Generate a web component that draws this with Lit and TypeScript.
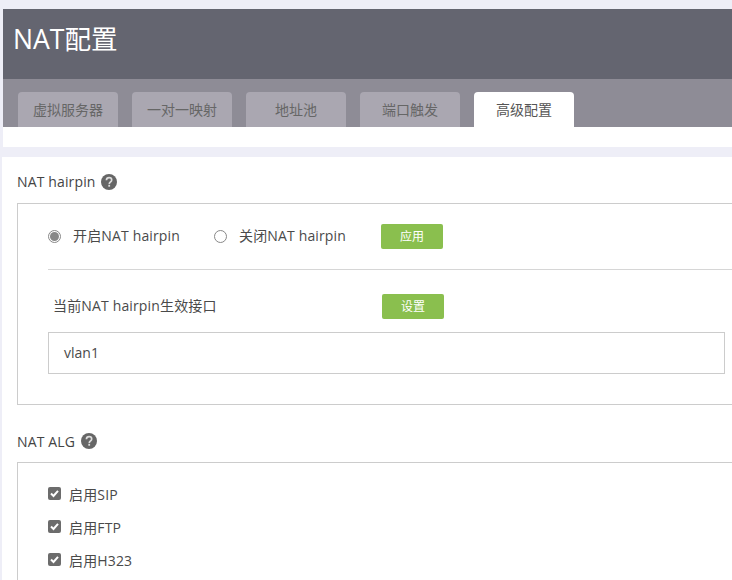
import { LitElement, html, css } from "lit";
import { customElement } from "lit/decorators.js";

const help = html`<svg class="help" viewBox="0 0 16 16" aria-hidden="true"><circle cx="8" cy="8" r="8" fill="#666"/><path d="M5.4 6.2C5.5 4.6 6.6 3.7 8.1 3.7c1.5 0 2.6.9 2.6 2.2 0 1-.5 1.5-1.3 2.1-.7.5-1.1 1-1.1 1.9" fill="none" stroke="#ddd" stroke-width="1.7"/><rect x="7.3" y="10.8" width="1.8" height="1.9" fill="#ddd"/></svg>`;

@customElement("app-root")
export class AppRoot extends LitElement {
  static styles = css`
    :host {
      display: block;
      width: 732px;
      height: 580px;
      overflow: hidden;
      background: #eeeef7;
      font-family: "Open Sans", "Noto Sans CJK SC", sans-serif;
      font-size: 14px;
      color: #555;
    }
    .top { margin-left: 3px; padding-top: 9px; }
    .title {
      height: 70px;
      background: #646570;
      color: #fff;
      font-size: 26.6px;
      line-height: 60px;
      padding-left: 10px;
      box-sizing: border-box;
    }
    .tabs {
      height: 48px;
      box-sizing: border-box;
      background: #8e8c96;
      padding: 13px 0 0 15px;
      display: flex;
      gap: 14px;
    }
    .tab {
      width: 100px;
      height: 35px;
      background: #aaa7b1;
      border-radius: 4px 4px 0 0;
      text-align: center;
      line-height: 36px;
      color: #666;
    }
    .tab.on { background: #fff; color: #555; }
    .under { height: 20px; background: #fff; }
    .main {
      margin: 10px 0 0 2px;
      height: 423px;
      background: #fff;
      padding-left: 15px;
      overflow: hidden;
    }
    .head {
      height: 46px;
      display: flex;
      align-items: center;
      gap: 5px;
      color: #444;
      letter-spacing: 0.14px;
    }
    .h1 { padding-top: 3px; box-sizing: border-box; }
    .help { width: 16px; height: 16px; }
    .box {
      width: 760px;
      box-sizing: border-box;
      border: 1px solid #ccc;
      padding-left: 30px;
    }
    .b1 { height: 202px; padding-top: 20px; }
    .radios { display: flex; align-items: center; height: 25px; }
    .radio {
      width: 13px;
      height: 13px;
      box-sizing: border-box;
      border: 1px solid #888;
      border-radius: 50%;
      display: flex;
      align-items: center;
      justify-content: center;
      margin-right: 12px;
    }
    .radio.on::after {
      content: "";
      width: 9px;
      height: 9px;
      border-radius: 50%;
      background: #888;
    }
    .lab { color: #4a4a4a; letter-spacing: 0.15px; }
    .up { padding-bottom: 4px; }
    .l1 { width: 141px; }
    .l2 { width: 142px; }
    .btn {
      width: 62px;
      height: 25px;
      background: #8abf4e;
      border-radius: 2px;
      color: #fff;
      font-size: 12px;
      line-height: 25px;
      text-align: center;
    }
    .rule { height: 1px; background: #d6d6d6; margin-top: 20px; }
    .iface { display: flex; align-items: center; height: 25px; margin-top: 24px; padding-left: 5px; }
    .iface .lab { width: 329px; }
    .input {
      width: 677px;
      height: 42px;
      box-sizing: border-box;
      border: 1px solid #ccc;
      margin-top: 13px;
      padding-left: 15px;
      line-height: 40px;
      color: #4a4a4a;
    }
    .head.h2 { height: 57px; padding-top: 15px; box-sizing: border-box; gap: 6px; }
    .b2 { height: 140px; padding-top: 14px; }
    .check {
      display: flex;
      align-items: center;
      height: 33px;
      gap: 8px;
    }
    .cb {
      width: 13px;
      height: 13px;
      background: #6c6c6c;
      border-radius: 2px;
    }
    .cb svg { display: block; width: 13px; height: 13px; }
  `;

  private check(t: string) {
    return html`<div class="check"><span class="cb"><svg viewBox="0 0 13 13"><path d="M3 6.5 5.5 9 10 3.8" fill="none" stroke="#fff" stroke-width="2"/></svg></span><span class="lab">${t}</span></div>`;
  }

  render() {
    return html`
      <div class="top">
        <div class="title">NAT配置</div>
        <div class="tabs">
          ${["虚拟服务器", "一对一映射", "地址池", "端口触发"].map((t) => html`<div class="tab">${t}</div>`)}
          <div class="tab on">高级配置</div>
        </div>
        <div class="under"></div>
      </div>
      <div class="main">
        <div class="head h1">NAT hairpin ${help}</div>
        <div class="box b1">
          <div class="radios">
            <span class="radio on"></span><span class="lab l1 up">开启NAT hairpin</span>
            <span class="radio"></span><span class="lab l2 up">关闭NAT hairpin</span>
            <span class="btn">应用</span>
          </div>
          <div class="rule"></div>
          <div class="iface"><span class="lab up">当前NAT hairpin生效接口</span><span class="btn">设置</span></div>
          <div class="input">vlan1</div>
        </div>
        <div class="head h2">NAT ALG ${help}</div>
        <div class="box b2">
          ${this.check("启用SIP")}${this.check("启用FTP")}${this.check("启用H323")}
        </div>
      </div>
    `;
  }
}
